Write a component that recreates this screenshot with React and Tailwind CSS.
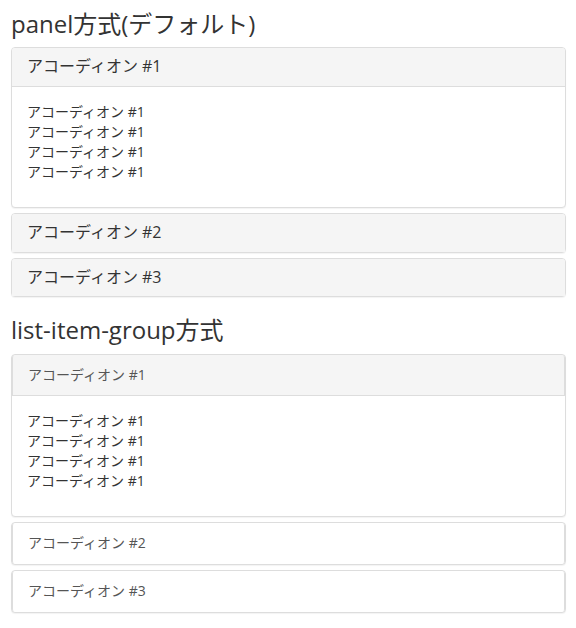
import React, { useState } from "react";

const font = { fontFamily: '"Open Sans", "Noto Sans CJK JP", sans-serif' };

const items = [
  { id: 1, label: "アコーディオン #1" },
  { id: 2, label: "アコーディオン #2" },
  { id: 3, label: "アコーディオン #3" },
];

function Body() {
  return (
    <div className="px-[15px] pt-[15px] pb-[25px] text-[14px] leading-5 text-[#333]">
      アコーディオン #1
      <br />
      アコーディオン #1
      <br />
      アコーディオン #1
      <br />
      アコーディオン #1
    </div>
  );
}

function PanelAccordion() {
  const [open, setOpen] = useState(1);
  return (
    <div className="flex flex-col gap-[5px] mb-5">
      {items.map((item) => (
        <div
          key={item.id}
          className="border border-[#ddd] rounded-[4px] bg-white shadow-[0_1px_1px_rgba(0,0,0,0.05)]"
        >
          <button
            onClick={() => setOpen(open === item.id ? 0 : item.id)}
            className="block w-full text-left px-[15px] py-[10px] bg-[#f5f5f5] rounded-t-[3px] text-[16px] leading-[1.1] text-[#333]"
          >
            {item.label}
          </button>
          {open === item.id && (
            <div className="border-t border-[#ddd]">
              <Body />
            </div>
          )}
        </div>
      ))}
    </div>
  );
}

function ListAccordion() {
  const [open, setOpen] = useState(1);
  return (
    <div className="flex flex-col gap-[5px]">
      {items.map((item) => {
        const isOpen = open === item.id;
        return (
          <div
            key={item.id}
            className="border border-[#ddd] rounded-[4px] bg-white shadow-[0_1px_1px_rgba(0,0,0,0.05)]"
          >
            <button
              onClick={() => setOpen(isOpen ? 0 : item.id)}
              className={`block w-full text-left px-[15px] border-x border-[#ddd] rounded-t-[3px] text-[14px] leading-5 text-[#555] ${
                isOpen ? "bg-[#f5f5f5] border-b py-[10px]" : "bg-white rounded-b-[3px] pt-[10px] pb-[11px]"
              }`}
            >
              {item.label}
            </button>
            {isOpen && <Body />}
          </div>
        );
      })}
    </div>
  );
}

export default function App() {
  return (
    <div className="bg-white min-h-screen pl-[11px] pr-[10px]" style={font}>
      <h3 className="mt-[11px] mb-[10px] text-[24px] leading-[1.1] text-[#333] font-normal">
        panel方式(デフォルト)
      </h3>
      <PanelAccordion />
      <h3 className="mb-[10px] text-[24px] leading-[1.1] text-[#333] font-normal">
        list-item-group方式
      </h3>
      <ListAccordion />
    </div>
  );
}
